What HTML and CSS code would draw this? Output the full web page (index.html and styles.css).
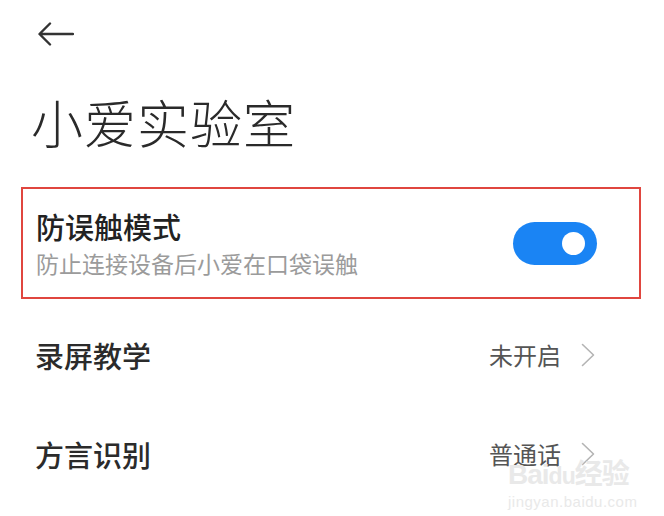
FILE: index.html
```html
<!DOCTYPE html>
<html lang="zh-CN">
<head>
<meta charset="utf-8">
<title>小爱实验室</title>
<link rel="stylesheet" href="styles.css">
</head>
<body>
<div class="page">
  <header class="topbar">
    <svg class="back" width="36" height="24" viewBox="0 0 36 24" aria-hidden="true">
      <path d="M35 12H2M12 1.5L1.5 12L12 22.5" fill="none" stroke="#333" stroke-width="2.4" stroke-linecap="round" stroke-linejoin="round"/>
    </svg>
  </header>
  <h1 class="title">小爱实验室</h1>

  <section class="card">
    <div class="card-text">
      <div class="card-title">防误触模式</div>
      <div class="card-sub">防止连接设备后小爱在口袋误触</div>
    </div>
    <div class="toggle"><span class="knob"></span></div>
  </section>

  <div class="list">
    <div class="row">
      <span class="row-label">录屏教学</span>
      <span class="row-value">未开启
        <svg class="chev" width="14" height="24" viewBox="0 0 14 24" aria-hidden="true"><path d="M1.5 1.5L12.5 12L1.5 22.5" fill="none" stroke="#b4b4b4" stroke-width="1.6" stroke-linecap="round" stroke-linejoin="round"/></svg>
      </span>
    </div>
    <div class="row">
      <span class="row-label">方言识别</span>
      <span class="row-value">普通话
        <svg class="chev" width="14" height="24" viewBox="0 0 14 24" aria-hidden="true"><path d="M1.5 1.5L12.5 12L1.5 22.5" fill="none" stroke="#b4b4b4" stroke-width="1.6" stroke-linecap="round" stroke-linejoin="round"/></svg>
      </span>
    </div>
  </div>

  <div class="watermark">
    <div class="wm-logo">Bai<span class="wm-du">du</span>经验</div>
    <div class="wm-url">jingyan.baidu.com</div>
  </div>
</div>
</body>
</html>
```
FILE: styles.css
```css
html, body {
  margin: 0;
  padding: 0;
  background: #ffffff;
}
body {
  font-family: "Noto Sans CJK SC", "Noto Sans", sans-serif;
  color: #222;
}
.page {
  position: relative;
  width: 664px;
  height: 516px;
  overflow: hidden;
}
.topbar {
  height: 68px;
  padding: 22px 0 0 38px;
  box-sizing: border-box;
}
.back {
  display: block;
}
.title {
  margin: 0;
  padding-left: 31px;
  font-size: 52px;
  font-weight: 300;
  line-height: 60px;
  height: 110px;
  padding-top: 24px;
  box-sizing: border-box;
  color: #2a2a2a;
  letter-spacing: 1px;
}
.card {
  margin: 9px 23px 0 21px;
  height: 112px;
  box-sizing: border-box;
  border: 2px solid #e0463f;
  display: flex;
  align-items: center;
  justify-content: space-between;
  padding: 0 42px 0 13px;
}
.card-text {
  display: flex;
  flex-direction: column;
  gap: 6px;
}
.card-title {
  font-size: 29px;
  font-weight: 500;
  line-height: 34px;
  color: #222;
}
.card-sub {
  font-size: 23px;
  line-height: 28px;
  color: #9b9b9b;
}
.toggle {
  width: 84px;
  height: 43px;
  border-radius: 22px;
  background: #1a84f4;
  display: flex;
  align-items: center;
  justify-content: flex-end;
  padding-right: 12px;
  box-sizing: border-box;
}
.knob {
  width: 23px;
  height: 23px;
  border-radius: 50%;
  background: #fff;
}
.list {
  padding-top: 6px;
}
.row {
  display: flex;
  align-items: center;
  justify-content: space-between;
  height: 99px;
  padding: 0 69px 0 35px;
}
.row-label {
  font-size: 29px;
  font-weight: 500;
  color: #2b2b2b;
}
.row-value {
  display: flex;
  align-items: center;
  gap: 20px;
  font-size: 24px;
  line-height: 26px;
  color: #555;
}
.chev {
  display: block;
}
.watermark {
  position: absolute;
  left: 508px;
  top: 461px;
  color: #e9e9e9;
  font-family: "Liberation Sans", "Noto Sans CJK SC", sans-serif;
  line-height: 1;
}
.wm-logo {
  font-size: 28px;
  font-weight: 700;
  letter-spacing: -1px;
}
.wm-du {
  font-size: 23px;
}
.wm-url {
  font-size: 15px;
  margin-top: 5px;
  letter-spacing: 0.5px;
}
```
